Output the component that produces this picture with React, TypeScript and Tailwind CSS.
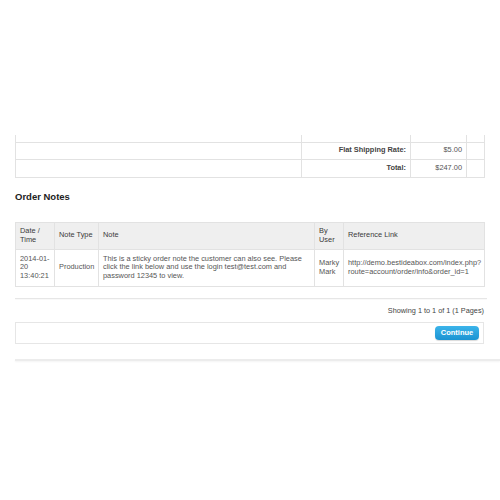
export default function App() {
  const cell = "border border-[#e2e2e2] px-[4px] align-middle whitespace-nowrap";
  return (
    <div
      className="w-[500px] h-[500px] bg-white text-[#555] text-[7.4px] leading-[8.5px] overflow-hidden"
      style={{ fontFamily: '"Liberation Sans", Arial, sans-serif' }}
    >
      <div className="pt-[135px] pl-[15px]">
        {/* totals */}
        <table className="border-collapse table-fixed w-[469px]">
          <colgroup>
            <col className="w-[286px]" />
            <col className="w-[109px]" />
            <col className="w-[56px]" />
            <col className="w-[18px]" />
          </colgroup>
          <tbody>
            <tr className="h-[7px]">
              <td className="border-x border-b border-[#e2e2e2]" />
              <td className="border-x border-b border-[#e2e2e2]" />
              <td className="border-x border-b border-[#e2e2e2]" />
              <td className="border-x border-b border-[#e2e2e2]" />
            </tr>
            <tr className="h-[17px]">
              <td className={cell} />
              <td className={`${cell} text-right font-bold text-[#444]`}>Flat Shipping Rate:</td>
              <td className={`${cell} text-right`}>$5.00</td>
              <td className={cell} />
            </tr>
            <tr className="h-[18px]">
              <td className={cell} />
              <td className={`${cell} text-right font-bold text-[#444]`}>Total:</td>
              <td className={`${cell} text-right`}>$247.00</td>
              <td className={cell} />
            </tr>
          </tbody>
        </table>

        <h2 className="mt-[13px] text-[9.5px] leading-[12px] font-bold text-[#222]">Order Notes</h2>

        {/* notes */}
        <table className="mt-[19px] border-collapse table-fixed w-[469px]">
          <colgroup>
            <col className="w-[39px]" />
            <col className="w-[44px]" />
            <col className="w-[216px]" />
            <col className="w-[29px]" />
            <col className="w-[141px]" />
          </colgroup>
          <thead>
            <tr className="h-[27px] bg-[#efefef] text-[#3a3a3a]">
              <td className={cell}>Date /<br />Time</td>
              <td className={cell}>Note Type</td>
              <td className={cell}>Note</td>
              <td className={cell}>By<br />User</td>
              <td className={cell}>Reference Link</td>
            </tr>
          </thead>
          <tbody>
            <tr className="h-[37px]">
              <td className={cell}>2014-01-<br />20<br />13:40:21</td>
              <td className={cell}>Production</td>
              <td className={cell}>
                This is a sticky order note the customer can also see. Please<br />
                click the link below and use the login test@test.com and<br />
                password 12345 to view.
              </td>
              <td className={cell}>Marky<br />Mark</td>
              <td className={cell}>
                http://demo.bestideabox.com/index.php?<br />
                route=account/order/info&amp;order_id=1
              </td>
            </tr>
          </tbody>
        </table>

        <div className="mt-[11px] w-[472px] border-t border-[#e6e6e6] shadow-[0_1px_1px_rgba(0,0,0,0.03)]" />
        <div className="w-[469px] mt-[7px] text-right text-[7.3px] leading-[9px] text-[#444]">
          Showing 1 to 1 of 1 (1 Pages)
        </div>

        <div className="mt-[7px] w-[469px] h-[22px] border border-[#e6e6e6] flex items-center justify-end pr-[4px]">
          <button className="w-[44px] h-[14px] rounded-[4px] bg-gradient-to-b from-[#3bb4ea] to-[#1a93d2] text-white font-bold text-[7.5px] leading-[14px] shadow-[0_1px_1px_rgba(0,0,0,0.15)]">
            Continue
          </button>
        </div>

        <div className="mt-[15px] h-[2px] bg-[#ececec] shadow-[0_1px_2px_rgba(0,0,0,0.05)]" />
      </div>
    </div>
  );
}
